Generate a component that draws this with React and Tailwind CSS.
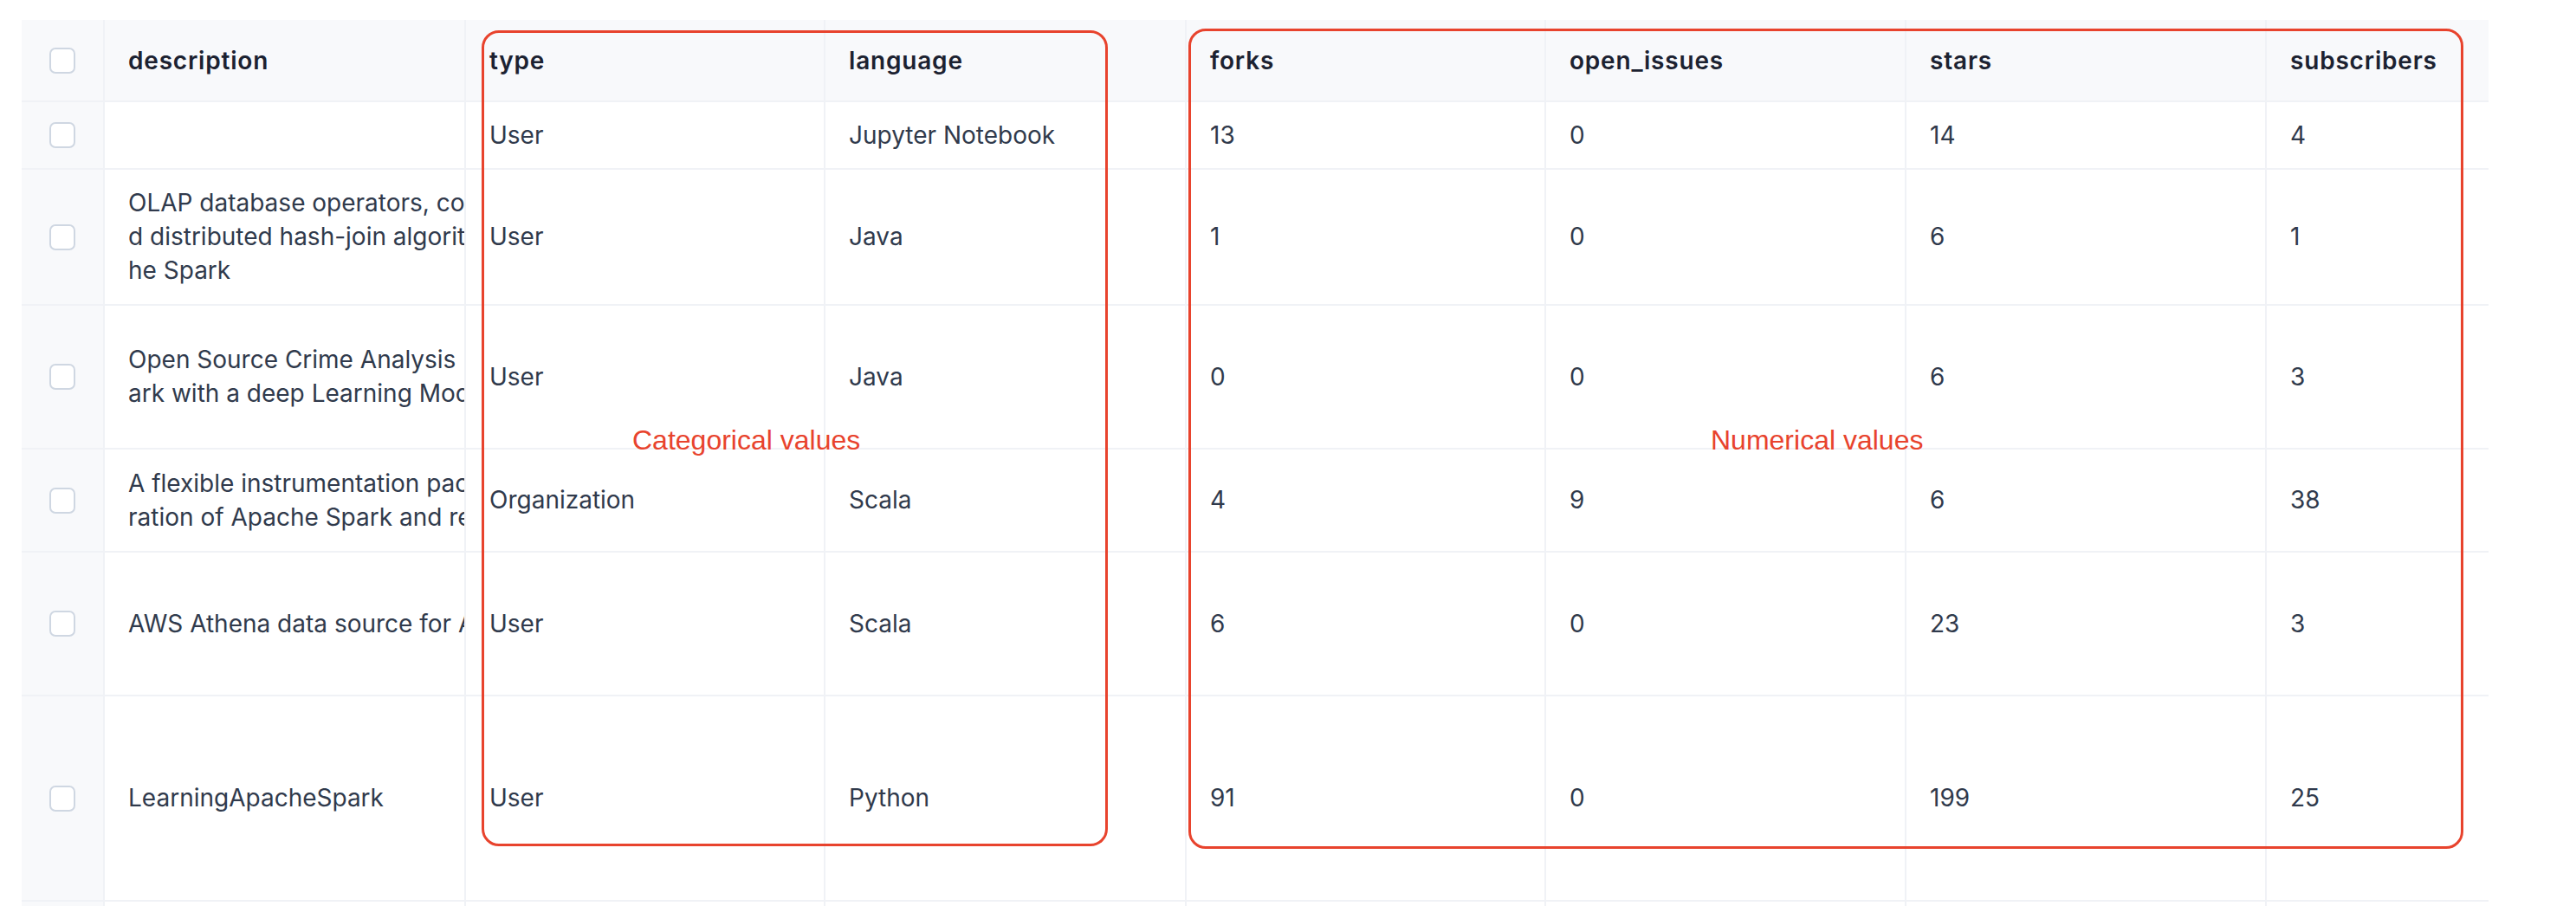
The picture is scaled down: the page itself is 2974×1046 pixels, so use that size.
import React from "react";

const columns = [
    { key: "description", w: "w-[417px]" },
    { key: "type", w: "w-[415px]" },
    { key: "language", w: "w-[417px]" },
    { key: "forks", w: "w-[415px]" },
    { key: "open_issues", w: "w-[416px]" },
    { key: "stars", w: "w-[416px]" },
    { key: "subscribers", w: "w-[416px]" },
];

// description is shown clipped by its column, so each wrapped line is kept as-is
const rows = [
    {
        h: "h-[78px]",
        description: [],
        type: "User",
        language: "Jupyter Notebook",
        forks: 13,
        open_issues: 0,
        stars: 14,
        subscribers: 4,
    },
    {
        h: "h-[157px]",
        description: [
            "OLAP database operators, concurrent sort-merge an",
            "d distributed hash-join algorithms for Apac",
            "he Spark",
        ],
        type: "User",
        language: "Java",
        forks: 1,
        open_issues: 0,
        stars: 6,
        subscribers: 1,
    },
    {
        h: "h-[166px]",
        description: [
            "Open Source Crime Analysis Using Sp",
            "ark with a deep Learning Model",
        ],
        type: "User",
        language: "Java",
        forks: 0,
        open_issues: 0,
        stars: 6,
        subscribers: 3,
    },
    {
        h: "h-[119px]",
        description: [
            "A flexible instrumentation package for the configu",
            "ration of Apache Spark and related tools",
        ],
        type: "Organization",
        language: "Scala",
        forks: 4,
        open_issues: 9,
        stars: 6,
        subscribers: 38,
    },
    {
        h: "h-[166px]",
        description: ["AWS Athena data source for Apache Spark"],
        type: "User",
        language: "Scala",
        forks: 6,
        open_issues: 0,
        stars: 23,
        subscribers: 3,
    },
    {
        h: "h-[237px]",
        description: ["LearningApacheSpark"],
        type: "User",
        language: "Python",
        forks: 91,
        open_issues: 0,
        stars: 199,
        subscribers: 25,
    },
    {
        h: "h-[120px]",
        description: [],
        type: "",
        language: "",
        forks: "",
        open_issues: "",
        stars: "",
        subscribers: "",
    },
];

const Checkbox = () => (
    <div className="w-[30px] h-[30px] rounded-[7px] border-2 border-[#cfd7e2] bg-white" />
);

const HeaderRow = () => (
    <div className="flex h-[95px] bg-[#f8f9fb]">
        <div className="w-[96px] shrink-0 flex items-center justify-center border-r-2 border-b-2 border-[#f0f2f6]">
            <Checkbox />
        </div>
        {columns.map((col) => (
            <div
                key={col.key}
                className={`${col.w} shrink-0 flex items-center pl-[27px] border-r-2 border-b-2 border-[#f0f2f6] text-[28px] font-semibold tracking-[0.8px] text-[#1c2231]`}
            >
                {col.key}
            </div>
        ))}
    </div>
);

const BodyRow = ({ row }) => (
    <div className={`flex ${row.h}`}>
        <div className="w-[96px] shrink-0 flex items-center justify-center bg-[#f8f9fb] border-r-2 border-b-2 border-[#f0f2f6]">
            <Checkbox />
        </div>
        {columns.map((col) => (
            <div
                key={col.key}
                className={`${col.w} shrink-0 flex items-center pl-[27px] overflow-hidden bg-white border-r-2 border-b-2 border-[#f0f2f6] text-[28px] leading-[39px] text-[#303a4c]`}
            >
                {col.key === "description" ? (
                    <div className="flex flex-col min-w-0 flex-1 overflow-hidden">
                        {row.description.map((line, i) => (
                            <span key={i} className="block whitespace-nowrap overflow-hidden text-clip">
                                {line}
                            </span>
                        ))}
                    </div>
                ) : (
                    <span className="whitespace-nowrap">{row[col.key]}</span>
                )}
            </div>
        ))}
    </div>
);

export default function App() {
    return (
        <div
            className="relative w-[2974px] h-[1046px] overflow-hidden bg-white"
            style={{ fontFamily: "Inter, 'Liberation Sans', sans-serif" }}
        >
            <div className="ml-[25px] mt-[23px] w-[2848px] overflow-hidden">
                <HeaderRow />
                {rows.map((row, i) => (
                    <BodyRow key={i} row={row} />
                ))}
            </div>

            {/* annotation overlays */}
            <div className="absolute left-[556px] top-[35px] w-[723px] h-[942px] rounded-[20px] border-[3px] border-[#e8432d]" />
            <div className="absolute left-[1372px] top-[33px] w-[1472px] h-[947px] rounded-[20px] border-[3px] border-[#e8432d]" />
            <div
                className="absolute left-[730px] top-[492px] text-[32px] leading-none text-[#e8432d] whitespace-nowrap"
                style={{ fontFamily: "'Liberation Sans', Arial, sans-serif" }}
            >
                Categorical values
            </div>
            <div
                className="absolute left-[1975px] top-[492px] text-[32px] leading-none text-[#e8432d] whitespace-nowrap"
                style={{ fontFamily: "'Liberation Sans', Arial, sans-serif" }}
            >
                Numerical values
            </div>
        </div>
    );
}
